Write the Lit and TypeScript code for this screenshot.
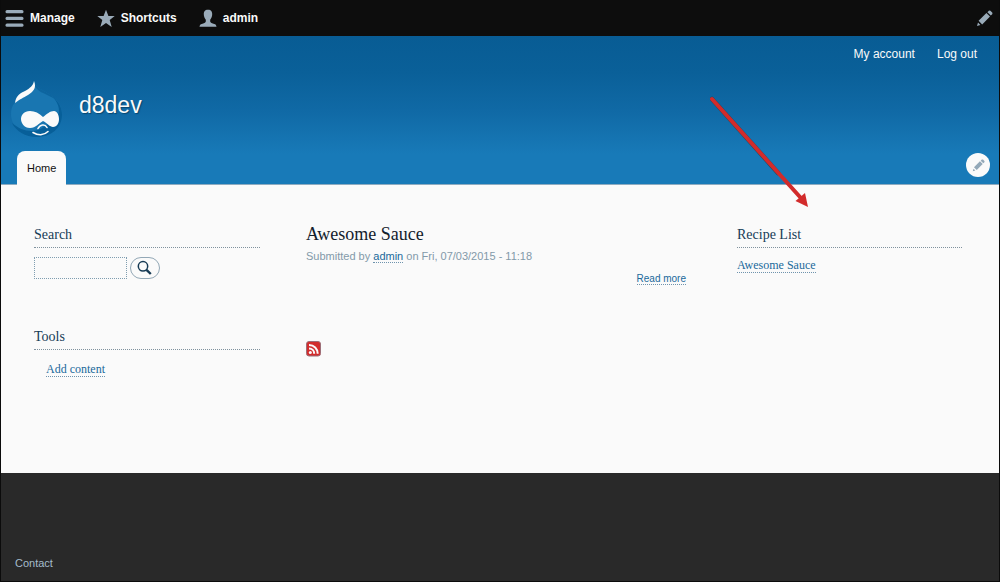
import { LitElement, html, css, svg } from "lit";
import { customElement } from "lit/decorators.js";

const pencil = svg`<path d="M1 16l1-3.400 2.400 2.400zM2.600 10.800L10.400 3l3.600 3.600L6.200 14.400zM11.400 2.200L12.800.8q.9-.6 1.600 0l1.800 1.800q.6.800 0 1.600l-1.400 1.400z" fill="currentColor"/>`;

@customElement("app-root")
export class AppRoot extends LitElement {
  static styles = css`
    :host {
      display: block;
      font-family: "Liberation Sans", Arial, sans-serif;
      font-size: 12px;
      line-height: 16px;
      color: #1b2730;
    }
    * { box-sizing: border-box; }
    a { color: inherit; text-decoration: none; }
    svg { display: block; }
    h1, h2, p, ul { margin: 0; padding: 0; font-weight: normal; }
    ul { list-style: none; }
    button { padding: 0; cursor: pointer; font: inherit; }
    .page {
      position: relative;
      display: flex;
      flex-direction: column;
      min-height: 100vh;
      border: solid #0b0b0b;
      border-width: 0 1px 1px;
      background: #fafafa;
    }
    .toolbar {
      display: flex;
      align-items: center;
      height: 36px;
      padding: 0 6px 0 4px;
      gap: 22px;
      background: #0d0d0d;
      color: #fafafa;
      font-weight: bold;
    }
    .tool { display: flex; align-items: center; gap: 6px; }
    .tool svg { color: #9aabb9; }
    .edit {
      margin-left: auto;
      border: 0;
      background: none;
      color: #9aabb9;
    }
    .header {
      display: flex;
      flex-direction: column;
      height: 149px;
      padding: 10px 9px 0;
      background: linear-gradient(#085c94 0%, #0a6099 25%, #1069a5 50%, #187ab8 80%, #187ab8 100%);
      border-bottom: 1px solid #8eabc0;
      color: #fafafa;
    }
    .account {
      display: flex;
      justify-content: flex-end;
      gap: 22px;
      padding-right: 13px;
    }
    .brand {
      display: flex;
      align-items: center;
      gap: 16px;
      margin-top: 18px;
    }
    .site {
      padding-bottom: 8px;
      font-size: 23px;
      line-height: 28px;
      text-shadow: 1px 1px 1px #07476f;
    }
    .navrow {
      display: flex;
      justify-content: space-between;
      align-items: flex-end;
      margin-top: auto;
      padding-left: 7px;
    }
    .tab {
      margin-bottom: -1px;
      padding: 9px 10px;
      border-radius: 8px 8px 0 0;
      background: #fafafa;
      color: #111;
      font-size: 11px;
    }
    .round {
      display: grid;
      place-items: center;
      width: 24px;
      height: 24px;
      margin-bottom: 7px;
      border: 0;
      border-radius: 50%;
      background: #fafafa;
      color: #93a8b8;
    }
    .main {
      display: grid;
      grid-template-columns: 226fr 385fr 225fr;
      gap: 46px;
      flex: 1;
      padding: 39px 37px 32px 33px;
    }
    .side {
      display: flex;
      flex-direction: column;
      gap: 47px;
      font-family: "Liberation Serif", "Times New Roman", serif;
    }
    .block h2 {
      padding: 2px 0 4px;
      border-bottom: 1px dotted #7f919d;
      font-size: 14px;
      line-height: 17px;
      color: #163c57;
    }
    .search { display: flex; gap: 3px; margin-top: 9px; }
    .search input {
      width: 93px;
      height: 22px;
      padding: 2px 4px;
      border: 1px dotted #7f9db0;
      background: #fafafa;
      font: inherit;
    }
    .search button {
      display: grid;
      place-items: center;
      width: 30px;
      height: 22px;
      border: 1px solid #93a8b6;
      border-radius: 11px;
      background: #fafafa;
      color: #163a54;
    }
    .links { margin-top: 9px; }
    .indent { padding-left: 12px; margin-top: 11px; }
    .link { color: #20699b; border-bottom: 1px dotted #6e93ad; }
    .content { padding-right: 5px; }
    .title {
      font-family: "Liberation Serif", "Times New Roman", serif;
      font-size: 18px;
      line-height: 20px;
      color: #12212c;
    }
    .meta { margin-top: 4px; font-size: 11px; color: #8299a9; }
    .content .meta { margin-top: 4px; }
    .content .more { margin-top: 7px; text-align: right; font-size: 10px; }
    .feed { display: inline-block; margin-top: 54px; }
    .footer {
      display: flex;
      align-items: flex-end;
      height: 108px;
      padding: 0 14px 10px;
      background: #292929;
      color: #a5bccb;
      font-size: 11px;
    }
    .arrow { position: absolute; left: 71%; top: 96px; pointer-events: none; }
  `;

  render() {
    return html`
      <div class="page">
        <nav class="toolbar" aria-label="Toolbar">
          <a class="tool" href="#manage">
            <svg width="19" height="18" viewBox="0 0 19 18" fill="currentColor"><rect y="1" x=".5" width="18" height="3.300" rx="1.500"/><rect x=".5" y="7.800" width="18" height="3.300" rx="1.500"/><rect x=".5" y="14.500" width="18" height="3.300" rx="1.500"/></svg>
            Manage
          </a>
          <a class="tool" href="#shortcuts">
            <svg width="18" height="18" viewBox="0 0 18 18" fill="currentColor"><path d="M9 .7l2.400 6.200h6.300l-5 4.100 2 6.900L9 13.900l-5.700 4 2-6.900-5-4.100h6.300z"/></svg>
            Shortcuts
          </a>
          <a class="tool" href="#admin">
            <svg width="18" height="18" viewBox="0 0 18 18" fill="currentColor"><path d="M9 .8c3.200 0 4.200 1.900 4.200 4.500 0 2-.8 4.100-2 5.500v1.800c0 1.300 2.200 2 4 2.400 1.300.3 2.100 1 2.300 2.800H.5c.2-1.800 1-2.500 2.300-2.800 1.800-.4 4-1.100 4-2.400v-1.800c-1.200-1.400-2-3.500-2-5.500C4.800 2.700 5.800.8 9 .8z"/></svg>
            admin
          </a>
          <button class="edit" aria-label="Edit"><svg width="17" height="17" viewBox="0 0 17 17">${pencil}</svg></button>
        </nav>

        <header class="header">
          <nav class="account" aria-label="Account">
            <a href="#account">My account</a><a href="#logout">Log out</a>
          </nav>
          <div class="brand">
            <a href="#home" aria-label="Site home">
              <svg width="53" height="58" viewBox="0 0 53 58">
                <path d="M24 1c2 7 9 9 15 13 8 5 13 11 13 21 0 13-11 22-25 22S1 47 1 34c0-9 5-14 11-18C18 12 23 8 24 1z" fill="#1976b1"/>
                <path d="M43 17c6 5 9 11 9 18 0 13-11 22-25 22C15 57 6 51 2 43c6 5 12 8 20 8 8 0 12-5 18-8 6-4 9-8 9-12 0-6-3-10-6-14z" fill="#075f99"/>
                <path d="M24 1c2 7 9 9 15 13 3 2 5 3 7 6-6-5-14-6-19-11-2-2-3-4-3-8z" fill="#0d659f"/>
                <path d="M24 1c3 7-1 11-6 14-5 3-8 4-13 8 1-8 6-10 10-12 5-3 8-5 9-10z" fill="#fafafa"/>
                <path d="M33 37c-4-4-8-6-13-6-6 0-9 4-9 8s3 9 9 9c6 0 9-5 13-7 4 2 7 6 10 6 4 0 6-4 6-8s-2-8-5-8c-4 0-7 3-11 6z" fill="#fafafa"/>
                <path d="M28 48.500c2-4 7-5 9-1M23 52.500c5 3 11 3 15-1" fill="none" stroke="#fafafa" stroke-width="1.600" stroke-linecap="round"/>
              </svg>
            </a>
            <h1 class="site"><a href="#home">d8dev</a></h1>
          </div>
          <div class="navrow">
            <a class="tab" href="#home">Home</a>
            <button class="round" aria-label="Configure block"><svg width="13" height="13" viewBox="0 0 17 17">${pencil}</svg></button>
          </div>
        </header>

        <main class="main">
          <aside class="side">
            <section class="block">
              <h2>Search</h2>
              <form class="search" role="search">
                <input type="search" aria-label="Search" />
                <button type="button" aria-label="Search"><svg width="16" height="16" viewBox="0 0 16 16" fill="none" stroke="currentColor"><circle cx="6" cy="6.300" r="4.700" stroke-width="1.500"/><path d="M9.500 9.800l4.300 4.200" stroke-width="2.400"/></svg></button>
              </form>
            </section>
            <section class="block">
              <h2>Tools</h2>
              <ul class="indent"><li><a class="link" href="#add">Add content</a></li></ul>
            </section>
          </aside>

          <article class="content">
            <h2 class="title"><a href="#sauce">Awesome Sauce</a></h2>
            <p class="meta">Submitted by <a class="link" href="#admin">admin</a> on Fri, 07/03/2015 - 11:18</p>
            <p class="more"><a class="link" href="#sauce">Read more</a></p>
            <a class="feed" href="#feed" aria-label="Subscribe">
              <svg width="15" height="16" viewBox="0 0 15 16"><rect x=".5" y=".5" width="14" height="14.500" rx="2.500" fill="#d22d2d" stroke="#9c6f78"/><circle cx="4.300" cy="11.500" r="1.500" fill="#fafafa"/><path d="M3 7.500c3 0 5.200 2.200 5.200 5.200M3 4c5 0 8.700 3.700 8.700 8.700" fill="none" stroke="#fafafa" stroke-width="2"/></svg>
            </a>
          </article>

          <aside class="side">
            <section class="block">
              <h2>Recipe List</h2>
              <ul class="links"><li><a class="link" href="#sauce">Awesome Sauce</a></li></ul>
            </section>
          </aside>
        </main>

        <footer class="footer"><a href="#contact">Contact</a></footer>

        <svg class="arrow" width="100" height="113" viewBox="0 0 100 113" aria-hidden="true">
          <path d="M2 3L68 77" stroke="#27485f" stroke-width="4.600" stroke-linecap="round"/>
          <path d="M2 3L90 101" stroke="#d22b2b" stroke-width="4" stroke-linecap="round"/>
          <path d="M98 111L85.500 105 95 97z" fill="#d22b2b"/>
        </svg>
      </div>
    `;
  }
}
